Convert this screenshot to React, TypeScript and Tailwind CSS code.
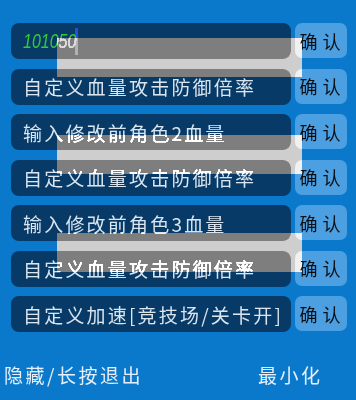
import { Fragment } from "react";

const rows = [
  "101050",
  "自定义血量攻击防御倍率",
  "输入修改前角色2血量",
  "自定义血量攻击防御倍率",
  "输入修改前角色3血量",
  "自定义血量攻击防御倍率",
  "自定义加速[竞技场/关卡开]",
];

// ghost bands that wash the list out (grey over the boxes, white over the blue)
const ghosts = ["top-[38px]", "top-[135px]", "top-[233px]"];

export default function App() {
  return (
    <div className="relative w-[356px] h-[400px] overflow-hidden bg-[#0a79cc] font-['Noto_Sans_CJK_SC','Noto_Sans',sans-serif]">
      <div className="flex flex-col gap-[9.5px] pt-[23px] pl-[11px]">
        {rows.map((text, i) => (
          <div key={i} className="flex h-[36px] gap-[4px]">
            <div className="flex w-[280px] items-center rounded-[8px] bg-[#073a66] pl-[12px]">
              {i === 0 ? (
                <Fragment>
                  <span className="w-[51px]">
                    <span className="inline-block origin-left scale-x-80 font-['Liberation_Sans',sans-serif] text-[20px] italic leading-none text-[#36c83c]">
                      {text}
                    </span>
                  </span>
                  <span className="ml-[1px] h-[27px] w-[3px] bg-[#2050e0]" />
                </Fragment>
              ) : (
                <span className="whitespace-nowrap text-[19px] leading-none tracking-[2.2px] text-[#dae5f0]">
                  {text}
                </span>
              )}
            </div>
            <button className="h-[35px] w-[52px] rounded-[7px] bg-[#4c9fe0] pl-[3px] text-[18px] leading-none tracking-[5px] text-[#0b0f14]">
              确认
            </button>
          </div>
        ))}
      </div>

      <div className="mt-[33px] flex items-center pl-[4px] text-[19px] leading-none tracking-[2.5px] text-[#e6eef7]">
        <span className="w-[254px]">隐藏/长按退出</span>
        <span>最小化</span>
      </div>

      {ghosts.map((top) => (
        <div
          key={top}
          className={`absolute left-[57px] h-[39px] w-[245px] backdrop-grayscale backdrop-brightness-[2.5] ${top}`}
        />
      ))}
    </div>
  );
}
